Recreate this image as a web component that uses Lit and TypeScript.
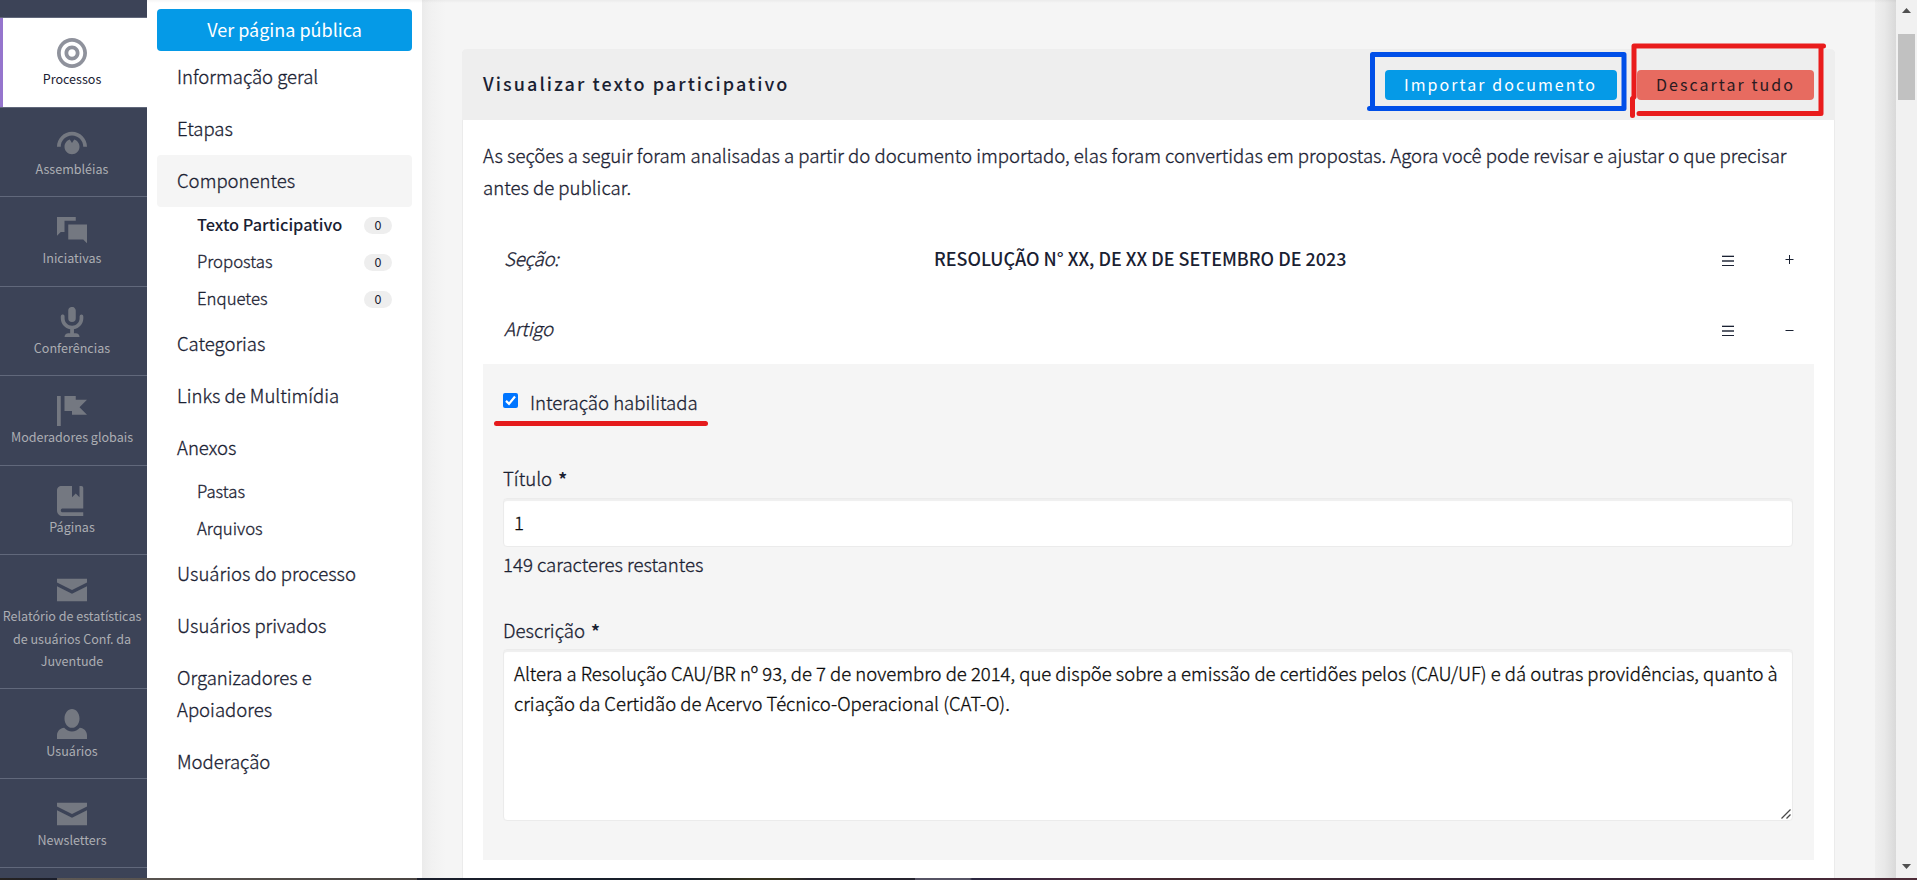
import { LitElement, html, svg, css, nothing } from 'lit';
import { customElement, property } from 'lit/decorators.js';
import { classMap } from 'lit/directives/class-map.js';

const ICONS: Record<string, ReturnType<typeof svg>> = {
  target: svg`<path d="M4 0c-2.2 0-4 1.8-4 4s1.8 4 4 4 4-1.8 4-4-1.8-4-4-4zm0 1c1.66 0 3 1.34 3 3s-1.34 3-3 3-3-1.34-3-3 1.34-3 3-3zm0 1c-1.1 0-2 .9-2 2s.9 2 2 2 2-.9 2-2-.9-2-2-2zm0 1c.56 0 1 .44 1 1s-.44 1-1 1-1-.44-1-1 .44-1 1-1z"/>`,
  dial: svg`<path transform="translate(0 1)" d="M4 0c-2.2 0-4 1.8-4 4h1c0-1.66 1.34-3 3-3s3 1.34 3 3h1c0-2.2-1.8-4-4-4zm-.59 2.09c-.81.25-1.41 1.01-1.41 1.91 0 1.11.9 2 2 2 1.11 0 2-.89 2-2 0-.9-.59-1.65-1.41-1.91l-.59.88-.59-.88z"/>`,
  chat: svg`<path d="M0 0v5l1-1h1v-3h3v-1h-5zm3 2v4h4l1 1v-5h-5z"/>`,
  microphone: svg`<path transform="translate(1)" d="M2.91-.03a1 1 0 0 0-.13.03 1 1 0 0 0-.78 1v2a1 1 0 1 0 2 0v-2a1 1 0 0 0-1.09-1.03zm-2.56 2.03a.5.5 0 0 0-.34.5v.5c0 1.48 1.09 2.69 2.5 2.94v1.06h-.5c-.55 0-1 .45-1 1h4.01c0-.55-.45-1-1-1h-.5v-1.06c1.41-.24 2.5-1.46 2.5-2.94v-.5a.5.5 0 1 0-1 0v.5c0 1.11-.89 2-2 2-1.11 0-2-.89-2-2v-.5a.5.5 0 0 0-.59-.5.5.5 0 0 0-.06 0z"/>`,
  flag: svg`<path d="M0 0v8h1v-8h-1zm2 0v4h2v1h4l-2-1.97 2-2.03h-3v-1h-3z"/>`,
  book: svg`<path d="M1 0l-.09.01c-.46.09-.81.45-.9.9l-.01.09v5.5c0 .83.67 1.5 1.5 1.5h5.5v-1h-5.5c-.28 0-.5-.22-.5-.5s.22-.5.5-.5h5.5v-5.5c0-.28-.22-.5-.5-.5h-.5v3l-1-1-1 1v-3h-3z"/>`,
  envelope: svg`<path transform="translate(0 1)" d="M0 0v1l4 2 4-2v-1h-8zm0 2v4h8v-4l-4 2-4-2z"/>`,
  person: svg`<path d="M4 0c-1.1 0-2 1.12-2 2.5s.9 2.5 2 2.5 2-1.12 2-2.5-.9-2.5-2-2.5zm-2.09 5c-1.06.05-1.91.92-1.91 2v1h8v-1c0-1.08-.84-1.95-1.91-2-.54.61-1.28 1-2.09 1-.81 0-1.55-.39-2.09-1z"/>`,
};

const FONT = css`"Noto Sans CJK SC", "Open Sans", sans-serif`;

@customElement('admin-nav')
class AdminNav extends LitElement {
  static styles = css`
    :host { display: block; width: 147px; flex: none; background: #3c4357; overflow: hidden; }
    .top { height: 17px; }
    .item {
      box-sizing: border-box; min-height: 89.5px; padding: 20px 3px 15.8px 0;
      border-top: 1px solid #61687b;
      display: flex; flex-direction: column; align-items: center;
      color: #acaeb3; font: 400 12.55px/22.4px ${FONT}; text-align: center;
    }
    .item svg { width: 30px; height: 30px; fill: #747881; display: block; flex: none; }
    .label { margin: 0.3px -2px 0; white-space: pre-line; }
    .active { background: #fff; color: #1a2132; padding-left: 0; box-shadow: inset 3px 0 #9575cd; }
    .active .label { margin-top: -0.5px; }
    .active svg { fill: #8f929c; }
  `;
  items = [
    ['target', 'Processos'], ['dial', 'Assembléias'], ['chat', 'Iniciativas'],
    ['microphone', 'Conferências'], ['flag', 'Moderadores globais'], ['book', 'Páginas'],
    ['envelope', 'Relatório de estatísticas\nde usuários Conf. da\nJuventude'],
    ['person', 'Usuários'], ['envelope', 'Newsletters'],
  ];
  render() {
    return html`<div class="top"></div>
      ${this.items.map(([icon, label], i) => html`
        <div class=${classMap({ item: true, active: i === 0 })}>
          <svg viewBox="0 0 8 8">${ICONS[icon]}</svg><span class="label">${label}</span>
        </div>`)}
      <div class="item"></div>`;
  }
}

type Entry = { text: string; active?: boolean; subs?: [string, string?][] };

@customElement('process-menu')
class ProcessMenu extends LitElement {
  static styles = css`
    :host {
      display: block; box-sizing: border-box; width: 275px; flex: none; background: #fff;
      padding: 9px 10px 0; color: #1a2132;
      font: 300 18.55px/32px ${FONT}; -webkit-text-stroke: 0.3px;
    }
    .public {
      height: 42px; box-sizing: border-box; padding-bottom: 2px; border-radius: 4px; background: #059ae7; color: #fff;
      display: flex; align-items: center; justify-content: center;
      font-weight: 400; font-size: 18px; -webkit-text-stroke: 0;
    }
    .entry { padding: 9px 20px 11px; border-radius: 4px; white-space: pre-line; }
    .on { background: #f5f5f5; }
    .sub {
      height: 37px; box-sizing: border-box; padding: 0 20px 0 40px;
      display: flex; align-items: center; justify-content: space-between;
      font-size: 16.75px;
    }
    .sub span:first-child { margin-bottom: 3px; }
    .sub .strong { font-weight: 500; font-size: 16.35px; -webkit-text-stroke: 0; }
    .badge {
      width: 28px; height: 17px; border-radius: 9px; background: #eee;
      font: 400 12.5px/15px ${FONT}; text-align: center; -webkit-text-stroke: 0;
    }
  `;
  entries: Entry[] = [
    { text: 'Informação geral' }, { text: 'Etapas' },
    { text: 'Componentes', active: true, subs: [['Texto Participativo', '0'], ['Propostas', '0'], ['Enquetes', '0']] },
    { text: 'Categorias' }, { text: 'Links de Multimídia' },
    { text: 'Anexos', subs: [['Pastas'], ['Arquivos']] },
    { text: 'Usuários do processo' }, { text: 'Usuários privados' },
    { text: 'Organizadores e\nApoiadores' }, { text: 'Moderação' },
  ];
  render() {
    return html`<div class="public">Ver página pública</div>
      ${this.entries.map((e) => html`
        <div class=${classMap({ entry: true, on: !!e.active })}>${e.text}</div>
        ${(e.subs ?? []).map(([t, n], i) => html`
          <div class="sub"><span class=${e.active && i === 0 ? 'strong' : ''}>${t}</span>
            ${n ? html`<span class="badge">${n}</span>` : nothing}</div>`)}`)}`;
  }
}

@customElement('section-row')
class SectionRow extends LitElement {
  @property() kind = '';
  @property() heading = '';
  @property() sign = '+';
  static styles = css`
    :host { display: flex; box-sizing: border-box; height: 70px; padding: 18px 20px 20px 21px; line-height: 32px; }
    .kind { width: 430px; flex: none; font-style: italic; letter-spacing: -0.15px; }
    .heading { flex: 1; font-weight: 500; font-size: 17.96px; -webkit-text-stroke: 0; white-space: nowrap; }
    .handle { width: 12px; height: 12px; margin: 13px 51px 0 0; }
    .sign { width: 9px; height: 9px; margin-top: 13px; }
  `;
  render() {
    return html`<span class="kind">${this.kind}</span><span class="heading">${this.heading}</span>
      <svg class="handle" viewBox="0 0 12 12" shape-rendering="crispEdges">
        <path fill="#b5b8be" d="M0 0h12v1H0z"/><path fill="#1a2132" d="M0 1h12v1H0zM0 10h12v1H0z"/><path fill="#5c616d" d="M0 5h12v2H0z"/>
      </svg>
      <svg class="sign" viewBox="0 0 9 9"><path stroke="#1a2132" fill="none" stroke-width="1" d=${this.sign === '+' ? 'M0.5 4.5h8M4.5 0v9' : 'M0.5 5.5h8'}/></svg>`;
  }
}

@customElement('article-form')
class ArticleForm extends LitElement {
  static styles = css`
    :host { display: block; box-sizing: border-box; height: 496px; padding: 22px 21px 0 20px; background: #f5f5f5; line-height: 32px; }
    .check { display: flex; position: relative; height: 32px; }
    .box { width: 15px; height: 15px; margin: 7px 12px 0 0; }
    .mark { position: absolute; left: -9px; top: 35px; width: 214px; height: 5px; border-radius: 3px; background: #e51b1c; }
    .label { display: block; }
    .first { margin-top: 44px; }
    .second { margin-top: 34px; }
    .req { margin-left: 2px; font-weight: 700; font-size: 17.5px; line-height: 1; -webkit-text-stroke: 0; }
    .field {
      box-sizing: border-box; background: #fff; border: 1px solid #ebebeb; border-radius: 4px;
      box-shadow: inset 0 2px 1px #efefef; color: #0a0a0a; padding: 0 10px; position: relative;
    }
    .line { height: 49px; margin-top: 4px; line-height: 46px; }
    .area { height: 172px; margin-top: 3px; padding-top: 8px; font-size: 18.51px; line-height: 30px; white-space: pre; }
    .grip { position: absolute; right: 1px; bottom: 1px; width: 10px; height: 10px; }
    .hint { margin-top: 1px; }
  `;
  render() {
    return html`
      <div class="check">
        <svg class="box" viewBox="0 0 15 15"><rect width="15" height="15" rx="2" fill="#0075ff"/><path d="M3 7.9l3 3 6-7.4" fill="none" stroke="#fff" stroke-width="2.2"/></svg>
        <span>Interação habilitada</span><i class="mark"></i>
      </div>
      <div class="label first">Título <span class="req">*</span></div>
      <div class="field line">1</div>
      <div class="hint">149 caracteres restantes</div>
      <div class="label second">Descrição <span class="req">*</span></div>
      <div class="field area">${'Altera a Resolução CAU/BR nº 93, de 7 de novembro de 2014, que dispõe sobre a emissão de certidões pelos (CAU/UF) e dá outras providências, quanto à\ncriação da Certidão de Acervo Técnico-Operacional (CAT-O).'}<svg class="grip" viewBox="0 0 10 10"><path d="M0.5 9.5l9-9M5.5 9.5l4-4" stroke="#4a4a4a" stroke-width="1.3" fill="none"/></svg></div>`;
  }
}

@customElement('app-root')
class AppRoot extends LitElement {
  static styles = css`
    :host {
      display: flex; flex-direction: column; width: 1917px; height: 880px; overflow: hidden; position: relative;
      color: #1a2132; background: #f5f5f5; font: 300 18.6px/32px ${FONT};
    }
    .page { display: flex; height: 878px; overflow: hidden; }
    .main {
      flex: 1; padding: 49px 40px 0; display: flex; overflow: hidden; -webkit-text-stroke: 0.3px;
      background: linear-gradient(90deg, #ebebeb, #f1f1f1 9px, #f5f5f5 24px);
    }
    .edge { width: 21px; flex: none; background: linear-gradient(90deg, #efefef, #e9e9e9 45%, #d9d9d9); }
    .bar { width: 21px; flex: none; background: #f1f1f1; display: flex; flex-direction: column; align-items: center; justify-content: space-between; }
    .arrow { width: 9px; height: 5px; display: block; fill: #505050; }
    .up { margin-top: 8px; }
    .down { margin-bottom: 9px; }
    .thumb { width: 17px; height: 66px; background: #c1c1c1; margin: 21px 0 auto; }
    .card { width: 1373px; box-sizing: border-box; border: 1px solid #ebebeb; border-width: 0 1px; border-radius: 5px 5px 0 0; background: #fff; }
    .head {
      height: 71px; box-sizing: border-box; margin: 0 -1px; padding: 0 21px; border-radius: 5px 5px 0 0; background: #eee;
      display: flex; align-items: center; gap: 20px; letter-spacing: 2px; -webkit-text-stroke: 0;
    }
    .title { flex: 1; font-weight: 500; font-size: 18px; letter-spacing: 2.07px; margin-bottom: 3px; }
    .btn { height: 30px; box-sizing: border-box; margin-top: 1px; padding: 0 20px 0 19px; border-radius: 4px; font-weight: 400; font-size: 16px; line-height: 28px; letter-spacing: 2.05px; white-space: nowrap; }
    .import { width: 232px; background: #059ae7; color: #fff; }
    .discard { width: 177px; background: #e76b60; color: #2a1a20; }
    .content { padding: 19px 20px 0; }
    .intro { margin: 0 0 21px; white-space: pre-line; font-size: 18.58px; }
    .topshade { position: absolute; left: 147px; top: 0; width: 1749px; height: 3px; background: linear-gradient(rgba(0,0,0,.04), transparent); }
    .notes { position: absolute; left: 1360px; top: 36px; width: 480px; height: 90px; fill: none; stroke-width: 5; stroke-linecap: round; stroke-linejoin: round; }
    .taskbar {
      height: 2px;
      background: linear-gradient(90deg, #26221f 0, #1b1e2b 55px, #1b1e2b 57px, #5d5854 57px, #4a4542 417px, #1a1e2b 417px, #18202b 690px, #36331f 750px, #36331f 786px, #26242f 810px, #26242f 915px, #565364 915px, #565364 970px, #2b2740 972px, #4a2a3e 1080px, #43292f 1180px, #3c2a35 1300px, #302336 1530px, #4d2c38 1917px);
    }
  `;
  render() {
    return html`
      <div class="page">
        <admin-nav></admin-nav>
        <process-menu></process-menu>
        <div class="main">
          <div class="card">
            <div class="head">
              <span class="title">Visualizar texto participativo</span>
              <span class="btn import">Importar documento</span>
              <span class="btn discard">Descartar tudo</span>
            </div>
            <div class="content">
              <p class="intro">${'As seções a seguir foram analisadas a partir do documento importado, elas foram convertidas em propostas. Agora você pode revisar e ajustar o que precisar\nantes de publicar.'}</p>
              <section-row kind="Seção:" heading="RESOLUÇÃO N° XX, DE XX DE SETEMBRO DE 2023" sign="+"></section-row>
              <section-row kind="Artigo" sign="-"></section-row>
              <article-form></article-form>
            </div>
          </div>
        </div>
        <div class="edge"></div>
        <div class="bar">
          <svg class="arrow up" viewBox="0 0 9 5"><path d="M0 5L4.5 0 9 5z"/></svg>
          <i class="thumb"></i>
          <svg class="arrow down" viewBox="0 0 9 5"><path d="M0 0L4.5 5 9 0z"/></svg>
        </div>
      </div>
      <div class="taskbar"></div>
      <div class="topshade"></div>
      <svg class="notes" viewBox="1360 36 480 90">
        <path stroke="#004fe8" d="M1372.5 108V54.5H1624V108.5H1369.5"/>
        <path stroke="#e91c1c" d="M1632.5 115.5V98.5L1634 97V46H1823.5M1821 47V113.5H1639"/>
      </svg>`;
  }
}
